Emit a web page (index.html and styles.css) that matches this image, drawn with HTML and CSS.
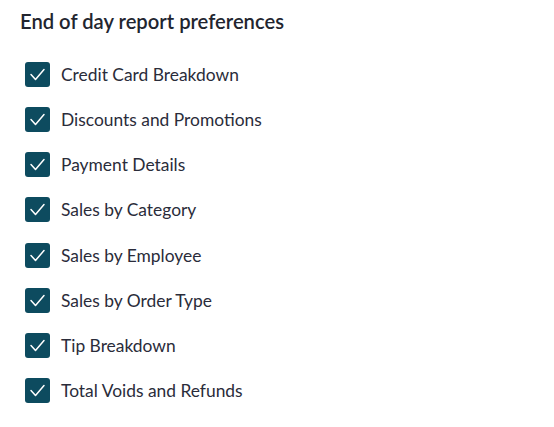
FILE: index.html
```html
<!DOCTYPE html>
<html>
<head>
<meta charset="utf-8">
<link rel="stylesheet" href="styles.css">
</head>
<body>
<div class="panel">
  <h2 class="title">End of day report preferences</h2>
  <ul class="list">
    <li class="item"><span class="box"><svg viewBox="0 0 25 25" width="25" height="25"><path d="M6 12.5 L10.5 17.5 L19 7.5" fill="none" stroke="#fff" stroke-width="1.5" stroke-linecap="round" stroke-linejoin="round"/></svg></span><span class="label">Credit Card Breakdown</span></li>
    <li class="item"><span class="box"><svg viewBox="0 0 25 25" width="25" height="25"><path d="M6 12.5 L10.5 17.5 L19 7.5" fill="none" stroke="#fff" stroke-width="1.5" stroke-linecap="round" stroke-linejoin="round"/></svg></span><span class="label">Discounts and Promotions</span></li>
    <li class="item"><span class="box"><svg viewBox="0 0 25 25" width="25" height="25"><path d="M6 12.5 L10.5 17.5 L19 7.5" fill="none" stroke="#fff" stroke-width="1.5" stroke-linecap="round" stroke-linejoin="round"/></svg></span><span class="label">Payment Details</span></li>
    <li class="item"><span class="box"><svg viewBox="0 0 25 25" width="25" height="25"><path d="M6 12.5 L10.5 17.5 L19 7.5" fill="none" stroke="#fff" stroke-width="1.5" stroke-linecap="round" stroke-linejoin="round"/></svg></span><span class="label">Sales by Category</span></li>
    <li class="item"><span class="box"><svg viewBox="0 0 25 25" width="25" height="25"><path d="M6 12.5 L10.5 17.5 L19 7.5" fill="none" stroke="#fff" stroke-width="1.5" stroke-linecap="round" stroke-linejoin="round"/></svg></span><span class="label">Sales by Employee</span></li>
    <li class="item"><span class="box"><svg viewBox="0 0 25 25" width="25" height="25"><path d="M6 12.5 L10.5 17.5 L19 7.5" fill="none" stroke="#fff" stroke-width="1.5" stroke-linecap="round" stroke-linejoin="round"/></svg></span><span class="label">Sales by Order Type</span></li>
    <li class="item"><span class="box"><svg viewBox="0 0 25 25" width="25" height="25"><path d="M6 12.5 L10.5 17.5 L19 7.5" fill="none" stroke="#fff" stroke-width="1.5" stroke-linecap="round" stroke-linejoin="round"/></svg></span><span class="label">Tip Breakdown</span></li>
    <li class="item"><span class="box"><svg viewBox="0 0 25 25" width="25" height="25"><path d="M6 12.5 L10.5 17.5 L19 7.5" fill="none" stroke="#fff" stroke-width="1.5" stroke-linecap="round" stroke-linejoin="round"/></svg></span><span class="label">Total Voids and Refunds</span></li>
  </ul>
</div>
</body>
</html>
```
FILE: styles.css
```css
html, body {
  margin: 0;
  padding: 0;
  background: #fff;
}
body {
  font-family: "Lato", "Open Sans", sans-serif;
  color: #1f2230;
}
.panel {
  padding: 9px 20px 0 20px;
}
.title {
  margin: 0;
  font-size: 20.2px;
  font-weight: 600;
  line-height: 24px;
  color: #22252f;
}
.list {
  list-style: none;
  margin: 29px 0 0 0;
  padding: 0 0 0 5px;
  display: flex;
  flex-direction: column;
  gap: 20.14px;
}
.item {
  display: flex;
  align-items: center;
  gap: 11px;
  height: 25px;
}
.box {
  width: 25px;
  height: 25px;
  border-radius: 3px;
  background: #0d4b5f;
  display: flex;
  flex: none;
}
.label {
  font-size: 17.4px;
  color: #2a2c3a;
}
```
